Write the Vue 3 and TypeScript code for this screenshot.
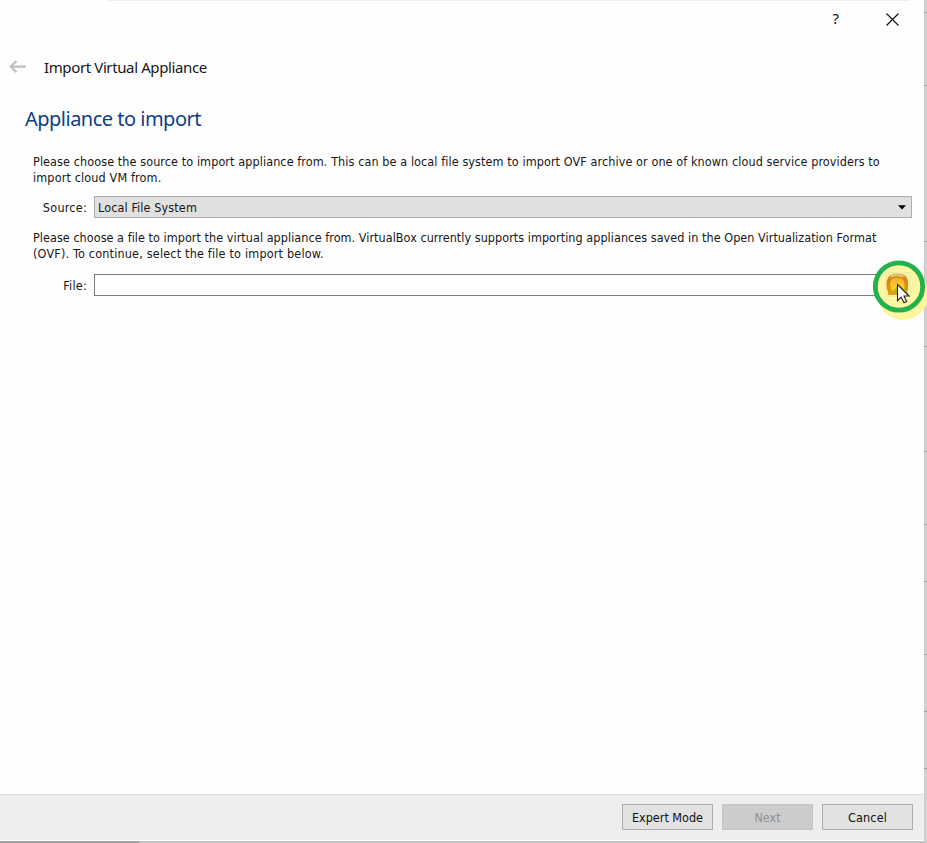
<script setup lang="ts">
import { ref } from 'vue'

const source = ref<string>('Local File System')
const file = ref<string>('')

// Row separators of the window behind, visible past the dialog's right edge
const gaps: number[] = [12, 72, 155, 104, 104, 72, 56, 72, 56, 56]
</script>

<template>
  <div class="screen">
    <main class="dialog">
      <div class="peek"></div>
      <div class="titlebar">
        <span class="help">?</span>
        <svg class="close" width="13" height="13" viewBox="0 0 13 13">
          <path d="M.5 .5 12.5 12.5M12.5 .5 .5 12.5" fill="none" stroke="#111" stroke-width="1.15" />
        </svg>
      </div>
      <header class="header">
        <svg class="back" width="18" height="14" viewBox="0 0 18 14">
          <path d="M17 6.600H2M7.500 1 1.700 6.600 7.500 12.200" fill="none" stroke="#bdbdbd" stroke-width="2.100" />
        </svg>
        <span class="wizard">Import Virtual Appliance</span>
      </header>
      <h1 class="heading"><span>Appliance to import</span></h1>
      <section class="content">
        <p class="para first">
          <span class="l1">Please choose the source to import appliance from. This can be a local file system to import OVF archive or one of known cloud service providers to</span><br />
          <span class="l2">import cloud VM from.</span>
        </p>
        <div class="row">
          <label class="label">Source:</label>
          <div class="select">
            <span>{{ source }}</span>
            <svg width="8" height="5" viewBox="0 0 8 5"><path d="M0 .3h8L4 4.600z" fill="#000" /></svg>
          </div>
        </div>
        <p class="para second">
          <span class="l3">Please choose a file to import the virtual appliance from. VirtualBox currently supports importing appliances saved in the Open Virtualization Format</span><br />
          <span class="l4">(OVF). To continue, select the file to import below.</span>
        </p>
        <div class="row file-row">
          <label class="label">File:</label>
          <input v-model="file" class="input" type="text" />
        </div>
      </section>
      <footer class="footer">
        <button class="btn">Expert Mode</button>
        <button class="btn disabled" disabled>Next</button>
        <button class="btn cancel">Cancel</button>
      </footer>
      <div class="bottom"><div class="bottom-dark"></div></div>
    </main>
    <aside class="edge">
      <i v-for="(g, i) in gaps" :key="i" class="tick" :style="{ marginTop: g + 'px' }"></i>
    </aside>
    <svg class="pointer" width="60" height="66" viewBox="867 256 60 66">
      <defs>
        <linearGradient id="gold" x1="0" y1="0" x2="0" y2="1">
          <stop offset="0" stop-color="#e0a03c" />
          <stop offset=".35" stop-color="#d58212" />
          <stop offset="1" stop-color="#e5a01c" />
        </linearGradient>
        <linearGradient id="face" x1="0" y1="0" x2="0" y2="1">
          <stop offset="0" stop-color="#f6b030" />
          <stop offset="1" stop-color="#ffdb20" />
        </linearGradient>
        <filter id="soft"><feGaussianBlur stdDeviation=".55" /></filter>
      </defs>
      <circle cx="903" cy="294.500" r="25.500" fill="#fff69e" />
      <circle cx="899" cy="287" r="23.500" fill="#fff6a4" />
      <path d="M877 279Q884 264 899 264L886 270 880 277z" fill="#fffde6" />
      <rect x="885.500" y="272.500" width="25" height="24" fill="#faf39c" stroke="#e8edaa" />
      <g filter="url(#soft)">
        <path d="M888 295V292Q886 288 886.500 282Q887.500 273.500 897.500 273.500Q908 273.500 908 282V290L903 295z" fill="url(#gold)" />
        <path d="M893 291Q889.500 288 890 283Q891 278 897 278Q904.500 278 904.500 284V289L900 292z" fill="url(#face)" />
        <path d="M891 276.500Q897 273.800 903 276.500" fill="none" stroke="#f3d59b" stroke-width="1.400" />
        <path d="M893 291 899 284.500 908 292.500V294H901z" fill="#a4bb18" />
      </g>
      <circle cx="899" cy="286.500" r="23.700" fill="none" stroke="#22b14c" stroke-width="4.800" />
      <path d="M897.500 284.500V300.700L901.200 297.200 904 302.800 906.700 301.500 904 296H909z" fill="#fff" stroke="#222" stroke-width="1.100" />
    </svg>
  </div>
</template>

<style>
body { margin: 0; overflow: hidden; }
</style>

<style scoped>
.screen {
  position: relative;
  display: flex;
  width: 927px;
  height: 843px;
  overflow: hidden;
  background: #fefefe;
  color: #161616;
  font: 12.5px/16px "DejaVu Sans Condensed", "DejaVu Sans", sans-serif;
  font-stretch: condensed;
}
.dialog { display: flex; flex-direction: column; width: 924px; height: 843px; }
.peek { height: 1px; margin-left: 109px; width: 800px; background: #eee; }
.titlebar { display: flex; align-items: center; justify-content: flex-end; height: 36px; padding-right: 25px; }
.help { margin: -2px 47px 0 0; font: 15px/20px "Noto Sans", sans-serif; color: #111; }
.close { display: block; }
.header { display: flex; align-items: center; height: 22px; margin-top: 20px; padding-left: 9px; }
.back { margin-top: -2px; }
.wizard { margin: -3px 0 0 17px; font: 15px/20px "Noto Sans", sans-serif; white-space: nowrap; letter-spacing: -.38px; }
.heading { margin: 27px 0 0 25px; font: 20px/26px "Noto Sans", sans-serif; letter-spacing: -.51px; color: #0c3f87; }
.content { display: flex; flex-direction: column; flex: 1; padding: 22px 12px 0 33px; }
.para { margin: 0; white-space: nowrap; }
.l1 { letter-spacing: .094px; }
.l2 { letter-spacing: .14px; }
.l3 { letter-spacing: .045px; }
.l4 { letter-spacing: .19px; }
.row { display: flex; align-items: center; height: 22px; margin-top: 10px; }
.label { width: 54px; text-align: right; margin-right: 7px; padding-top: 2px; letter-spacing: .25px; }
.select {
  display: flex; flex: 1; align-items: center; justify-content: space-between;
  box-sizing: border-box; height: 22px; padding: 0 5px 0 3px;
  border: 1px solid #adadad; background: #e0e0e0;
}
.select span { padding-top: 2px; letter-spacing: .12px; }
.second { margin-top: 12px; }
.file-row { margin-top: 12px; }
.input { box-sizing: border-box; width: 792px; height: 22px; border: 1px solid #7a7a7a; background: #fff; padding: 0 3px; font: inherit; outline: 0; }
.footer {
  display: flex; align-items: flex-start; justify-content: flex-end; gap: 9px;
  box-sizing: border-box; height: 46px; padding: 9px 11px 0 0;
  border-top: 1px solid #dcdcdc; background: #eee;
}
.btn { box-sizing: border-box; width: 91px; height: 26px; padding: 1px 0 0; border: 1px solid #adadad; background: #e2e2e2; color: #111; font: inherit; white-space: nowrap; }
.cancel { letter-spacing: .15px; }
.disabled { border-color: #c4c4c4; background: #ccc; color: #919191; }
.bottom { height: 2px; border-top: 1px solid #fff; background: #c3c3c3; }
.bottom-dark { width: 139px; height: 2px; background: #a0a0a0; }
.edge { width: 3px; height: 843px; background: linear-gradient(90deg, #c6c6c6, #d3d3d3 60%); display: flex; flex-direction: column; }
.tick { display: block; flex: none; height: 1px; background: #a0a0a0; }
.pointer { position: absolute; left: 867px; top: 256px; }
</style>
